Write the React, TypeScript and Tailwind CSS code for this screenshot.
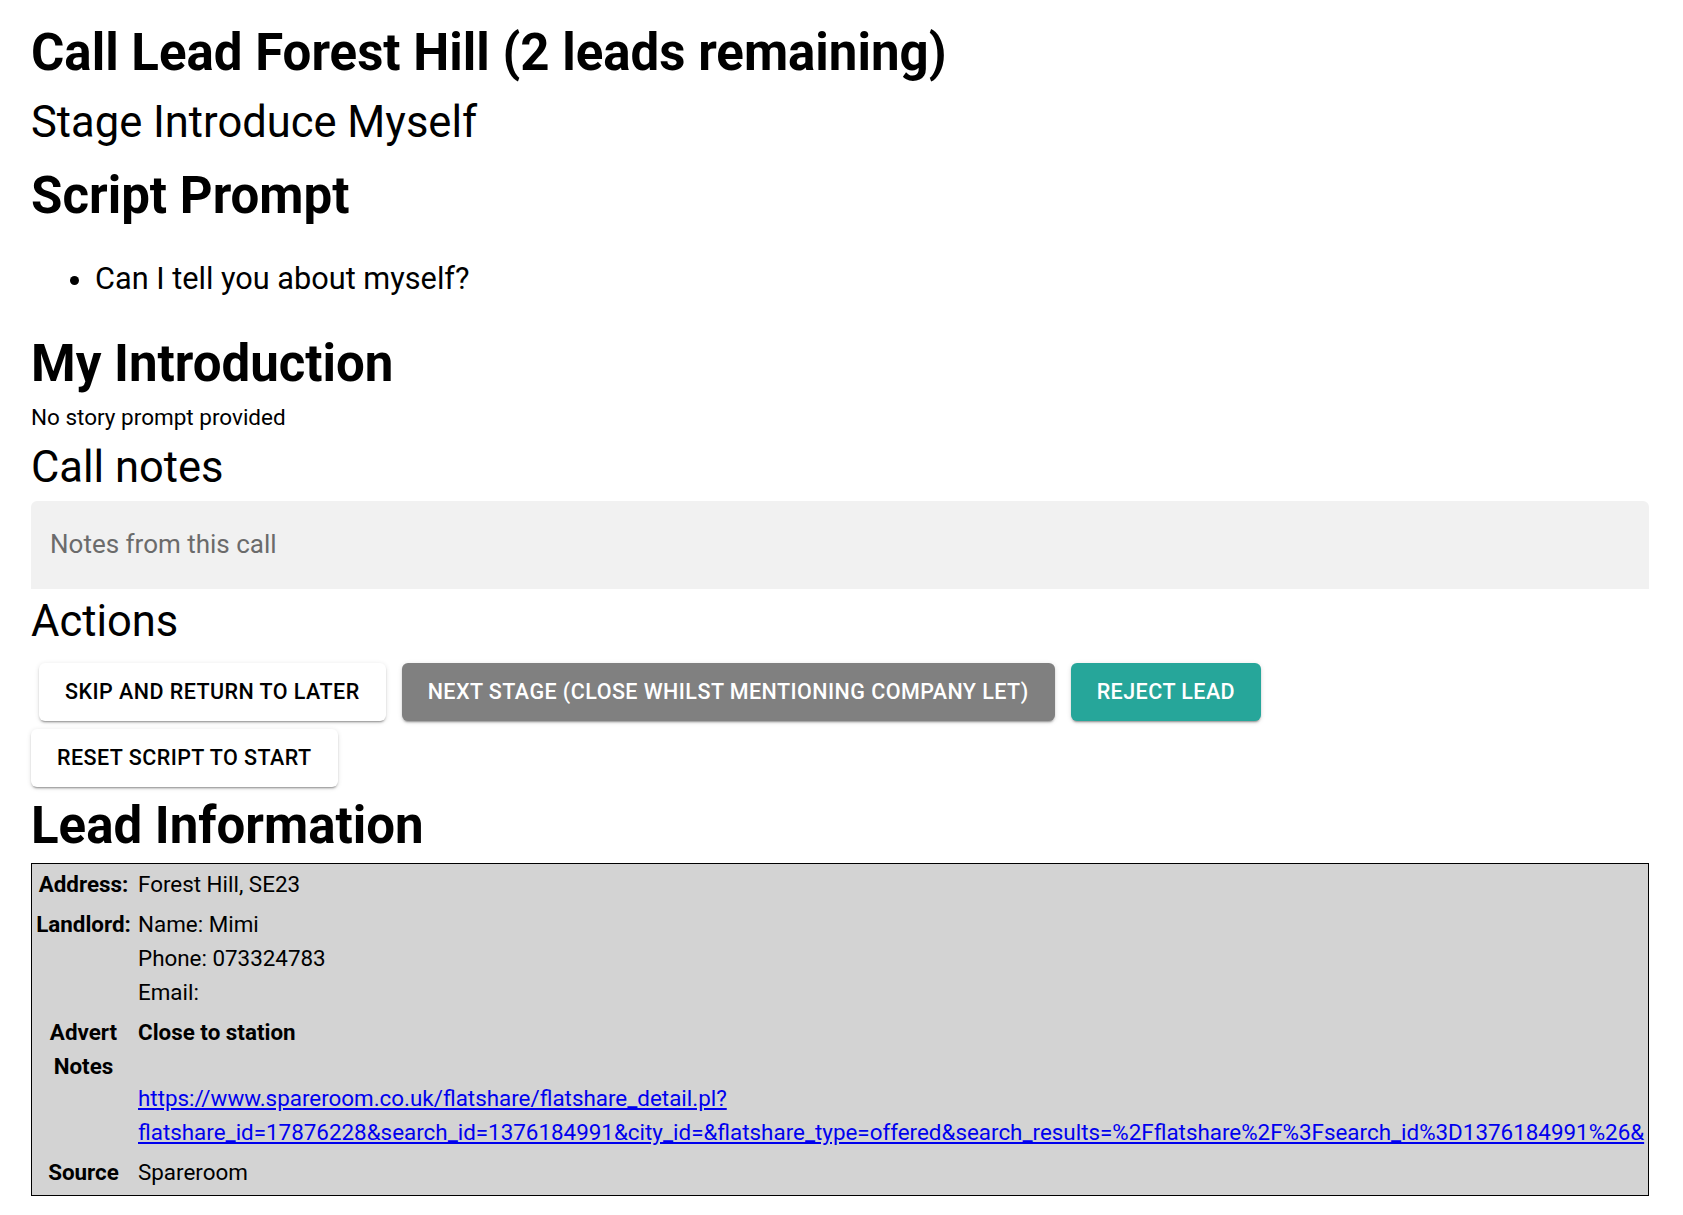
const buttonShadow =
  "shadow-[0px_3px_1px_-2px_rgba(0,0,0,0.2),0px_2px_2px_0px_rgba(0,0,0,0.14),0px_1px_5px_0px_rgba(0,0,0,0.12)]";

function ActionButton({ label, tone, className = "" }: { label: string; tone: "white" | "gray" | "teal"; className?: string }) {
  const toneClass =
    tone === "white"
      ? "bg-white text-black"
      : tone === "gray"
        ? "bg-[#808080] text-white"
        : "bg-[#26a69a] text-white";
  return (
    <button
      className={`h-[58px] px-[26px] rounded-[6px] text-[21.5px] font-medium uppercase tracking-[0.45px] leading-none ${toneClass} ${buttonShadow} ${className}`}
    >
      {label}
    </button>
  );
}

export default function App() {
  const url =
    "https://www.spareroom.co.uk/flatshare/flatshare_detail.pl?flatshare_id=17876228&search_id=1376184991&city_id=&flatshare_type=offered&search_results=%2Fflatshare%2F%3Fsearch_id%3D1376184991%26&";

  return (
    <div className="min-h-screen w-full bg-white text-black font-['Roboto',sans-serif] pl-[31px] pr-[34px]">
      {/* Header */}
      <h1 className="pt-[23px] text-[51px] leading-[60px] font-bold">Call Lead Forest Hill (2 leads remaining)</h1>
      <h2 className="mt-[14px] text-[43.5px] leading-[52px] font-normal">Stage Introduce Myself</h2>

      {/* Script prompt */}
      <h2 className="mt-[17px] text-[51px] leading-[60px] font-bold">Script Prompt</h2>
      <ul className="mt-[33px] list-disc pl-[64px] text-[30.7px] leading-[40px]">
        <li>Can I tell you about myself?</li>
      </ul>

      <h2 className="mt-[35px] text-[51px] leading-[60px] font-bold">My Introduction</h2>
      <p className="mt-[8px] text-[22.5px] leading-[30px]">No story prompt provided</p>

      {/* Call notes */}
      <h3 className="mt-[10px] text-[43.5px] leading-[52px] font-normal">Call notes</h3>
      <textarea
        placeholder="Notes from this call"
        className="mt-[7px] block w-full h-[88px] resize-none rounded-t-[6px] bg-[#f1f1f1] pl-[19px] pt-[28px] text-[26px] leading-[31px] outline-none placeholder:text-[#6b6b6b]"
      />

      {/* Actions */}
      <h3 className="mt-[7px] text-[43.5px] leading-[52px] font-normal">Actions</h3>
      <div className="mt-[15px] flex flex-wrap items-center">
        <ActionButton label="Skip and return to later" tone="white" className="mx-[8px]" />
        <ActionButton label="Next stage (Close whilst mentioning company let)" tone="gray" className="mx-[8px]" />
        <ActionButton label="Reject lead" tone="teal" className="mx-[8px]" />
      </div>
      <div className="mt-[8px] flex">
        <ActionButton label="Reset script to start" tone="white" />
      </div>

      {/* Lead information */}
      <h2 className="mt-[9px] text-[51px] leading-[60px] font-bold">Lead Information</h2>
      <div className="mt-[7px] border border-black bg-[#d3d3d3] pl-[1px] pt-[3px] pb-[6px] text-[22.4px] leading-[34px]">
        <div className="grid grid-cols-[101px_1fr] gap-x-[4px] gap-y-[6px]">
          <div className="font-bold text-center">Address:</div>
          <div>Forest Hill, SE23</div>

          <div className="font-bold text-center">Landlord:</div>
          <div className="flex flex-col">
            <span>Name: Mimi</span>
            <span>Phone: 073324783</span>
            <span>Email:</span>
          </div>

          <div className="font-bold text-center">Advert Notes</div>
          <div className="flex flex-col min-w-0">
            <span className="font-bold">Close to station</span>
            <span className="h-[32px]" />
            <a href={url} className="text-[#0000ee] underline whitespace-nowrap">
              https://www.spareroom.co.uk/flatshare/flatshare_detail.pl?
              <br />
              flatshare_id=17876228&amp;search_id=1376184991&amp;city_id=&amp;flatshare_type=offered&amp;search_results=%2Fflatshare%2F%3Fsearch_id%3D1376184991%26&amp;
            </a>
          </div>

          <div className="font-bold text-center">Source</div>
          <div>Spareroom</div>
        </div>
      </div>
    </div>
  );
}
